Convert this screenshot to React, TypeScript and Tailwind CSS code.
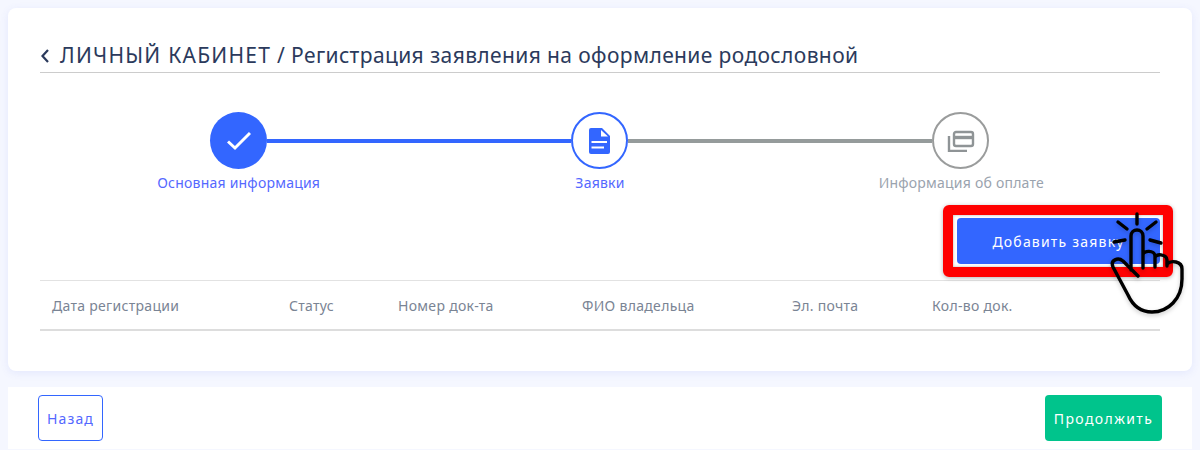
import React from 'react';

const columns = [
  { label: 'Дата регистрации', width: 'w-[237px]' },
  { label: 'Статус', width: 'w-[109px]' },
  { label: 'Номер док-та', width: 'w-[184px]' },
  { label: 'ФИО владельца', width: 'w-[210px]' },
  { label: 'Эл. почта', width: 'w-[140px]' },
  { label: 'Кол-во док.', width: 'w-[120px]' },
];

function Hand() {
  return (
    <svg
      viewBox="1105 210 85 110"
      className="absolute left-[148px] top-[-8px] w-[85px] h-[110px] drop-shadow-[0_2px_2px_rgba(0,0,0,0.2)]"
      fill="none"
      stroke="#000"
      strokeWidth="3.4"
      strokeLinecap="round"
      strokeLinejoin="round"
    >
      {/* rays */}
      <path d="M1137 214v10M1118 222l9 7M1156 222l-9 7M1114 242l11-2M1150 240l11 3" />
      {/* fingers and palm */}
      <path d="M1131 270V236c0-8 12-8 12 0v32M1143 255c0-5 12-5 12 1v11M1155 258c0-5 12-4 12 2v6M1167 264c4-4 15-3 15 5v10c0 20-14 33-30 33-12 0-19-6-24-17l-15-28c-3-7 5-10 10-6l15 15" />
    </svg>
  );
}

export default function App() {
  return (
    <div className="w-[1200px] h-[450px] overflow-hidden bg-[#f5f7ff] px-2 pt-2 font-['Noto_Sans',sans-serif]">
      {/* Main card */}
      <div className="h-[363px] rounded-lg bg-white px-8 pt-[33px] shadow-[0_2px_8px_rgba(80,100,240,0.1)]">
        <div className="flex h-[32px] items-center gap-[11px] border-b border-[#cccccc] pb-[2px] pl-[1px] text-[21px] text-[#2b3a5c]">
          <svg viewBox="0 0 8 14" className="h-[14px] w-[8px]" fill="none" stroke="currentColor" strokeWidth="2.2">
            <path d="M7 1 1.5 7 7 13" />
          </svg>
          <span className="whitespace-pre tracking-[0.38px]">
            <span className="tracking-[1.25px]">ЛИЧНЫЙ КАБИНЕТ</span> / Регистрация заявления на оформление родословной
          </span>
        </div>

        {/* Stepper */}
        <div className="mt-[39px] flex items-center pl-[170px] pr-[171px]">
          <div className="flex h-[57px] w-[57px] shrink-0 items-center justify-center rounded-full bg-[#3366ff]">
            <svg viewBox="0 0 24 24" className="h-[24px] w-[24px]" fill="none" stroke="#fff" strokeWidth="3">
              <path d="M1 12.5 8 19 23 4" />
            </svg>
          </div>
          <div className="h-1 flex-1 bg-[#3366ff]" />
          <div className="flex h-[57px] w-[57px] shrink-0 items-center justify-center rounded-full border-2 border-[#3366ff]">
            <svg viewBox="0 0 21 26" className="h-[26px] w-[21px]">
              <path fill="#3366ff" d="M2 0h11l8 8v16a2 2 0 0 1-2 2H2a2 2 0 0 1-2-2V2a2 2 0 0 1 2-2z" />
              <path fill="#fff" d="M12 2l7 6.5h-7zM2.5 13H18v2H2.5zM2.5 18.5H15v2H2.5z" />
            </svg>
          </div>
          <div className="h-1 flex-1 bg-[#959b9b]" />
          <div className="flex h-[57px] w-[57px] shrink-0 items-center justify-center rounded-full border-2 border-[#9a9c9c]">
            <svg viewBox="0 0 28 22" className="h-[22px] w-[28px]" fill="none" stroke="#8f9496" strokeWidth="2.4">
              <rect x="7" y="2" width="19" height="14" rx="2" />
              <path d="M7 7.5h19" strokeWidth="3.4" />
              <path d="M2 6v15h18" />
            </svg>
          </div>
        </div>
        <div className="mx-[18px] mt-[4px] grid grid-cols-3 text-center text-[14px] leading-[20px] tracking-[0.22px] text-[#5468ff]">
          <div>Основная информация</div>
          <div>Заявки</div>
          <div className="text-[#9aa3ae]">Информация об оплате</div>
        </div>

        {/* Action button */}
        <div className="mt-[25px] flex justify-end">
          <div className="relative">
            <button className="h-[46px] w-[203px] rounded-[4px] bg-[#3366ff] text-[14px] tracking-[1.2px] text-white">
              Добавить заявку
            </button>
            <div className="absolute -left-[14px] -right-[13px] -top-[13px] -bottom-[13px] rounded-[6px] border-[10px] border-[#ff0000] shadow-[0_1px_4px_rgba(0,0,0,0.3),inset_0_0_3px_rgba(0,0,0,0.3)]" />
            <Hand />
          </div>
        </div>

        {/* Empty table */}
        <div className="mt-[16px] flex h-[51px] items-center border-y border-b-2 border-t-[#e2e2e2] border-b-[#dddddd] pl-3 text-[14px] tracking-[0.3px] text-[#7a8494]">
          {columns.map((col) => (
            <div key={col.label} className={col.width}>
              {col.label}
            </div>
          ))}
        </div>
      </div>

      {/* Footer */}
      <div className="mt-4 flex h-[62px] items-center justify-between bg-white pl-[30px] pr-[30px]">
        <button className="h-[46px] w-[65px] rounded-[4px] border border-[#3366ff] text-[14px] tracking-[1.1px] text-[#5468ff]">
          Назад
        </button>
        <button className="h-[46px] w-[117px] rounded-[4px] bg-[#00c48c] text-[14px] tracking-[1.4px] text-white">
          Продолжить
        </button>
      </div>
    </div>
  );
}
